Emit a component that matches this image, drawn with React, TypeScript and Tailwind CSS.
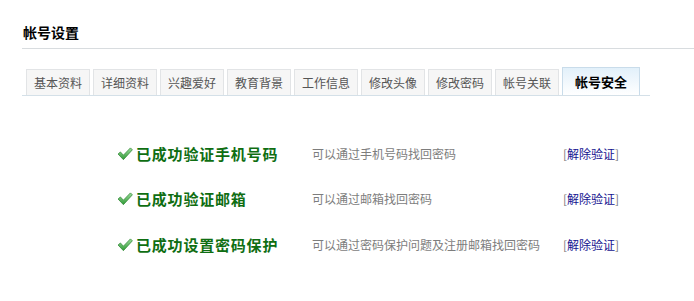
const tabs = ["基本资料", "详细资料", "兴趣爱好", "教育背景", "工作信息", "修改头像", "修改密码", "帐号关联"];

const rows = [
  { title: "已成功验证手机号码", desc: "可以通过手机号码找回密码" },
  { title: "已成功验证邮箱", desc: "可以通过邮箱找回密码" },
  { title: "已成功设置密码保护", desc: "可以通过密码保护问题及注册邮箱找回密码" },
];

function Check() {
  return (
    <svg width="16" height="14" viewBox="0 0 15 13" className="shrink-0">
      <defs>
        <linearGradient id="ck" x1="0" y1="0" x2="0" y2="1">
          <stop offset="0" stopColor="#9bdc9b" />
          <stop offset="1" stopColor="#2f9a35" />
        </linearGradient>
      </defs>
      <path
        d="M1 6.5 L3.2 4.6 L6 7.6 L12.6 0.8 L14.4 2.6 L6 11.8 Z"
        fill="url(#ck)"
        stroke="#3b8f3f"
        strokeWidth="0.8"
        strokeLinejoin="round"
      />
    </svg>
  );
}

export default function App() {
  return (
    <div
      className="w-[694px] h-[301px] bg-white pl-[22px]"
      style={{ fontFamily: '"Noto Sans CJK SC", "Noto Sans", sans-serif' }}
    >
      <div className="pt-[24px] pb-[8px] border-b border-[#d8dcdf]">
        <h1 className="pl-[1px] text-[14px] leading-[16px] font-bold text-black">帐号设置</h1>
      </div>

      <div className="mt-[18px] w-[628px] h-[29px] flex items-end gap-[3px] pl-[4px] border-b border-[#d4e0e8]">
        {tabs.map((t) => (
          <div
            key={t}
            className="w-[64px] h-[26px] flex items-center justify-center bg-[#f6f6f6] border border-b-0 border-[#e2e4e6] text-[12px] text-[#555]"
          >
            {t}
          </div>
        ))}
        <div className="w-[78px] h-[28px] flex items-center justify-center bg-gradient-to-b from-[#e2f0fa] to-white border border-b-0 border-[#c9dcea] text-[13px] font-bold text-black">
          帐号安全
        </div>
      </div>

      <div className="mt-[35px] flex flex-col">
        {rows.map((r) => (
          <div key={r.title} className="h-[45.5px] flex items-center">
            <div className="w-[290px] pl-[95px] flex items-center gap-[3px]">
              <Check />
              <span className="text-[15px] font-bold tracking-[0.8px] text-[#0f6e12] whitespace-nowrap">
                {r.title}
              </span>
            </div>
            <div className="w-[251px] text-[12px] text-[#7d7d7d] whitespace-nowrap">{r.desc}</div>
            <div className="text-[12px] whitespace-nowrap">
              <span className="text-[#7a7a7a]">[</span>
              <span className="text-[#14148f]">解除验证</span>
              <span className="text-[#7a7a7a]">]</span>
            </div>
          </div>
        ))}
      </div>
    </div>
  );
}
